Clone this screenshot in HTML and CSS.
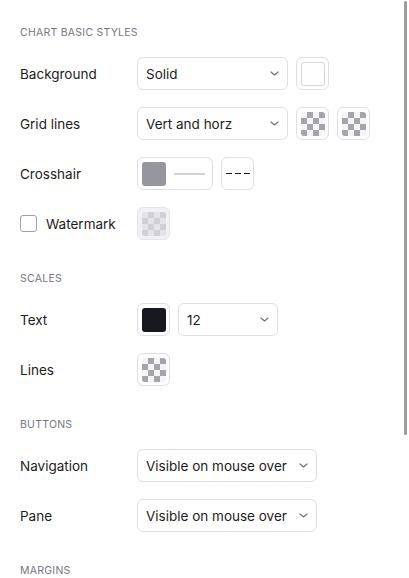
FILE: index.html
```html
<!DOCTYPE html>
<html>
<head>
<meta charset="utf-8">
<link rel="stylesheet" href="styles.css">
</head>
<body>
<div class="panel">
  <section class="section">
    <h3 class="heading">Chart basic styles</h3>
    <div class="row">
      <div class="label">Background</div>
      <div class="controls">
        <div class="select w-bg"><span>Solid</span><svg class="chev" width="9" height="5" viewBox="0 0 9 5"><path d="M1 1l3.5 3 3.5-3" fill="none" stroke="#6b7280" stroke-width="1.2" stroke-linecap="round" stroke-linejoin="round"/></svg></div>
        <div class="swatch-btn"><div class="swatch white"></div></div>
      </div>
    </div>
    <div class="row">
      <div class="label">Grid lines</div>
      <div class="controls">
        <div class="select w-bg"><span>Vert and horz</span><svg class="chev" width="9" height="5" viewBox="0 0 9 5"><path d="M1 1l3.5 3 3.5-3" fill="none" stroke="#6b7280" stroke-width="1.2" stroke-linecap="round" stroke-linejoin="round"/></svg></div>
        <div class="swatch-btn"><div class="swatch checker"></div></div>
        <div class="swatch-btn"><div class="swatch checker"></div></div>
      </div>
    </div>
    <div class="row">
      <div class="label">Crosshair</div>
      <div class="controls">
        <div class="combo"><div class="swatch gray"></div><div class="line-sample"></div></div>
        <div class="swatch-btn dash-btn"><span class="dash"></span><span class="dash"></span><span class="dash"></span></div>
      </div>
    </div>
    <div class="row">
      <div class="label check-label"><span class="checkbox"></span><span>Watermark</span></div>
      <div class="controls">
        <div class="swatch-btn disabled"><div class="swatch checker-light"></div></div>
      </div>
    </div>
  </section>

  <section class="section">
    <h3 class="heading">Scales</h3>
    <div class="row">
      <div class="label">Text</div>
      <div class="controls">
        <div class="swatch-btn"><div class="swatch dark"></div></div>
        <div class="select w-size"><span>12</span><svg class="chev" width="9" height="5" viewBox="0 0 9 5"><path d="M1 1l3.5 3 3.5-3" fill="none" stroke="#6b7280" stroke-width="1.2" stroke-linecap="round" stroke-linejoin="round"/></svg></div>
      </div>
    </div>
    <div class="row">
      <div class="label">Lines</div>
      <div class="controls">
        <div class="swatch-btn"><div class="swatch checker"></div></div>
      </div>
    </div>
  </section>

  <section class="section">
    <h3 class="heading">Buttons</h3>
    <div class="row">
      <div class="label">Navigation</div>
      <div class="controls">
        <div class="select w-wide"><span>Visible on mouse over</span><svg class="chev" width="9" height="5" viewBox="0 0 9 5"><path d="M1 1l3.5 3 3.5-3" fill="none" stroke="#6b7280" stroke-width="1.2" stroke-linecap="round" stroke-linejoin="round"/></svg></div>
      </div>
    </div>
    <div class="row">
      <div class="label">Pane</div>
      <div class="controls">
        <div class="select w-wide"><span>Visible on mouse over</span><svg class="chev" width="9" height="5" viewBox="0 0 9 5"><path d="M1 1l3.5 3 3.5-3" fill="none" stroke="#6b7280" stroke-width="1.2" stroke-linecap="round" stroke-linejoin="round"/></svg></div>
      </div>
    </div>
  </section>

  <section class="section">
    <h3 class="heading">Margins</h3>
  </section>
</div>
<div class="scrollbar"><div class="thumb"></div></div>
</body>
</html>
```

FILE: styles.css
```css
html, body {
  margin: 0;
  padding: 0;
  height: 100%;
  overflow: hidden;
  background: #ffffff;
}
body {
  font-family: Inter, "Noto Sans", sans-serif;
  color: #1c1c22;
  font-size: 13.5px;
}
.panel {
  padding: 24px 20px 0 20px;
  display: flex;
  flex-direction: column;
  gap: 30px;
}
.section {
  display: flex;
  flex-direction: column;
  gap: 17px;
}
.heading {
  margin: 0;
  padding-top: 1px;
  font-size: 10.5px;
  line-height: 15px;
  font-weight: 400;
  text-transform: uppercase;
  letter-spacing: 0.25px;
  color: #76767f;
}
.row {
  display: flex;
  align-items: center;
  height: 33px;
}
.label {
  width: 117px;
  flex: none;
  line-height: 20px;
}
.check-label {
  display: flex;
  align-items: center;
  gap: 9px;
}
.checkbox {
  width: 15px;
  height: 15px;
  border: 1px solid #a1a1aa;
  border-radius: 3px;
  box-sizing: content-box;
  background: #fff;
}
.controls {
  display: flex;
  align-items: center;
  gap: 8px;
}
.select {
  height: 33px;
  box-sizing: border-box;
  border: 1px solid #dedee5;
  border-radius: 6px;
  display: flex;
  align-items: center;
  justify-content: space-between;
  padding: 0 8px 0 8px;
  background: #fff;
}
.chev { flex: none; }
.w-bg { width: 151px; }
.w-size { width: 100px; }
.w-wide { width: 180px; }
.swatch-btn {
  width: 33px;
  height: 33px;
  box-sizing: border-box;
  border: 1px solid #dedee5;
  border-radius: 6px;
  display: flex;
  align-items: center;
  justify-content: center;
  background: #fff;
}
.swatch-btn.disabled {
  background: #f1f1f4;
  border-color: #e4e4ea;
}
.swatch {
  width: 24px;
  height: 24px;
  box-sizing: border-box;
  border-radius: 3px;
}
.swatch.white {
  background: #fff;
  border: 1px solid #d4d4da;
}
.swatch.gray { background: #96979e; }
.swatch.dark { background: #17171f; }
.swatch.checker {
  background-color: #f4f4f6;
  background-image:
    linear-gradient(45deg, #a4a5ab 25%, transparent 25%, transparent 75%, #a4a5ab 75%),
    linear-gradient(45deg, #a4a5ab 25%, transparent 25%, transparent 75%, #a4a5ab 75%);
  background-size: 12px 12px;
  background-position: 0 0, 6px 6px;
}
.swatch.checker-light {
  background-color: #e4e4e8;
  background-image:
    linear-gradient(45deg, #cfcfd4 25%, transparent 25%, transparent 75%, #cfcfd4 75%),
    linear-gradient(45deg, #cfcfd4 25%, transparent 25%, transparent 75%, #cfcfd4 75%);
  background-size: 12px 12px;
  background-position: 0 0, 6px 6px;
}
.combo {
  width: 76px;
  height: 33px;
  box-sizing: border-box;
  border: 1px solid #dedee5;
  border-radius: 6px;
  display: flex;
  align-items: center;
  padding: 0 7px 0 4px;
  gap: 8px;
}
.line-sample {
  flex: 1;
  height: 2px;
  background: #d0d0d6;
}
.dash-btn {
  gap: 3px;
}
.dash {
  width: 6px;
  height: 1.5px;
  background: #1c1c22;
}
.scrollbar {
  position: absolute;
  top: 0;
  right: 0;
  width: 8px;
  height: 100%;
}
.thumb {
  position: absolute;
  top: 1px;
  left: 3px;
  width: 3px;
  height: 434px;
  background: #9a9ba3;
  border-radius: 2px;
}
```
